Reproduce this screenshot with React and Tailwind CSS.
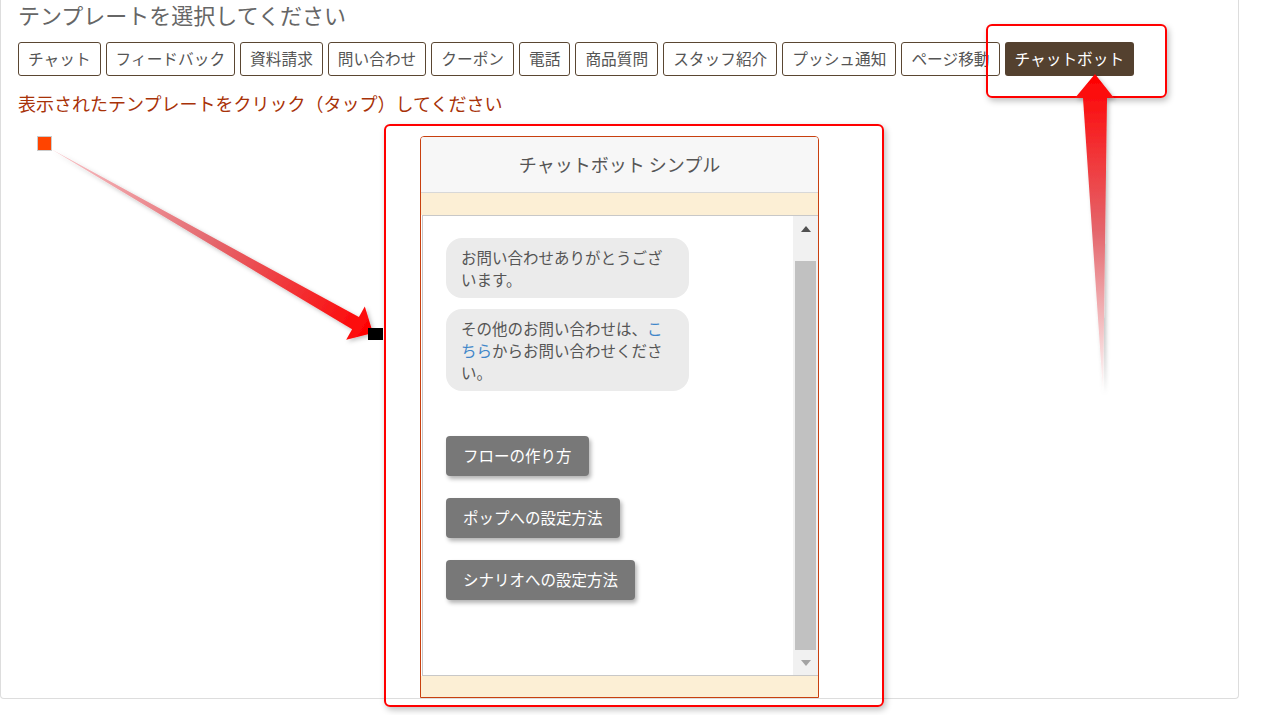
import React from "react";

const tabs = ["チャット","フィードバック","資料請求","問い合わせ","クーポン","電話","商品質問","スタッフ紹介","プッシュ通知","ページ移動"];

function Widget() {
  return (
    <div className="w-[399px] h-[562px] border border-[#c8400f] rounded-t-[4px] flex flex-col overflow-hidden">
      <div className="h-[56px] shrink-0 bg-[#f7f7f7] border-b border-[#d8d8d8] flex items-center justify-center text-[18px] text-[#555]">
        チャットボット シンプル
      </div>
      <div className="h-[22px] shrink-0 bg-[#fcefd5]" />
      <div className="h-[461px] shrink-0 ml-[1px] border-y border-l border-[#c8c8c8] bg-white flex">
        <div className="flex-1 pl-[23px] pt-[22px] flex flex-col items-start">
          <div className="w-[243px] bg-[#ebebeb] rounded-[16px] px-[15px] py-[8px] text-[15.5px] leading-[22px] text-[#555]">
            お問い合わせありがとうございます。
          </div>
          <div className="mt-[11px] w-[243px] bg-[#ebebeb] rounded-[16px] px-[15px] py-[8px] text-[15.5px] leading-[22px] text-[#555]">
            その他のお問い合わせは、<span className="text-[#3f86c9]">こちら</span>からお問い合わせください。
          </div>
          <div className="mt-[45px] flex flex-col items-start gap-[22px]">
            {["フローの作り方","ポップへの設定方法","シナリオへの設定方法"].map((t) => (
              <div key={t} className="h-[40px] px-[17px] flex items-center bg-[#787878] text-white text-[15.5px] rounded-[4px] shadow-[2px_3px_4px_rgba(0,0,0,0.3)]">
                {t}
              </div>
            ))}
          </div>
        </div>
        <div className="w-[25px] bg-[#f1f1f1] flex flex-col items-center">
          <div className="h-[26px] flex items-center justify-center">
            <div className="w-0 h-0 border-l-[5px] border-r-[5px] border-b-[6px] border-l-transparent border-r-transparent border-b-[#505050]" />
          </div>
          <div className="w-[21px] h-[389px] mt-[19px] bg-[#c1c1c1]" />
          <div className="flex-1 flex items-center justify-center">
            <div className="w-0 h-0 border-l-[5px] border-r-[5px] border-t-[6px] border-l-transparent border-r-transparent border-t-[#a3a3a3]" />
          </div>
        </div>
      </div>
      <div className="flex-1 bg-[#fcefd5]" />
    </div>
  );
}

export default function App() {
  return (
    <div className="relative w-[1274px] h-[715px] bg-white overflow-hidden font-['Noto_Sans_CJK_JP','Noto_Sans',sans-serif]">
      <div className="w-[1239px] h-[699px] border-x border-b border-[#dddddd] rounded-b-[4px] pl-[17px]">
        <div className="text-[22px] leading-[28px] text-[#666]">テンプレートを選択してください</div>
        <div className="mt-[14px] flex gap-[5px]">
          {tabs.map((t) => (
            <div key={t} className="h-[34px] px-[9px] flex items-center border border-[#5a4632] rounded-[3px] text-[15.7px] text-[#555]">
              {t}
            </div>
          ))}
          <div className="h-[34px] px-[10px] flex items-center bg-[#54412f] rounded-[3px] text-[15.7px] text-white">
            チャットボット
          </div>
        </div>
        <div className="mt-[15px] text-[18px] leading-[24px] text-[#a83208]">
          表示されたテンプレートをクリック（タップ）してください
        </div>
        <div className="mt-[21px] ml-[402px]">
          <Widget />
        </div>
      </div>

      {/* annotations */}
      <div className="absolute left-[37px] top-[136px] w-[15px] h-[15px] bg-[#ff4400] border border-[#cccccc]" />
      <div className="absolute left-[986px] top-[24px] w-[181px] h-[74px] border-2 border-[#ff0000] rounded-[6px] shadow-[2px_3px_6px_rgba(0,0,0,0.25)]" />
      <div className="absolute left-[384px] top-[124px] w-[500px] h-[583px] border-2 border-[#ff0000] rounded-[6px] shadow-[2px_3px_6px_rgba(0,0,0,0.25)]" />
      <svg className="absolute left-0 top-0 pointer-events-none" width="1274" height="715" viewBox="0 0 1274 715">
        <defs>
          <linearGradient id="g1" gradientUnits="userSpaceOnUse" x1="51" y1="149" x2="373" y2="333">
            <stop offset="0" stopColor="#f7c4c8" />
            <stop offset="0.5" stopColor="#e4676d" />
            <stop offset="1" stopColor="#ff0000" />
          </linearGradient>
          <linearGradient id="g2" gradientUnits="userSpaceOnUse" x1="0" y1="74" x2="0" y2="392">
            <stop offset="0" stopColor="#ff0000" />
            <stop offset="0.5" stopColor="#e4676d" />
            <stop offset="1" stopColor="#ffffff" />
          </linearGradient>
          <filter id="sh" x="-20%" y="-20%" width="140%" height="140%">
            <feDropShadow dx="2" dy="2" stdDeviation="2" floodColor="#000" floodOpacity="0.25" />
          </filter>
        </defs>
        <polygon filter="url(#sh)" fill="url(#g1)" points="51,149 352.1,329.3 346.2,339.8 373,333 364.8,306.6 358.9,317.1" />
        <polygon filter="url(#sh)" fill="url(#g2)" points="1095,74 1114,98 1107,98 1103,392 1083,98 1075,98" />
      </svg>
      <div className="absolute left-[368px] top-[328px] w-[15px] h-[12px] bg-black" />
    </div>
  );
}
